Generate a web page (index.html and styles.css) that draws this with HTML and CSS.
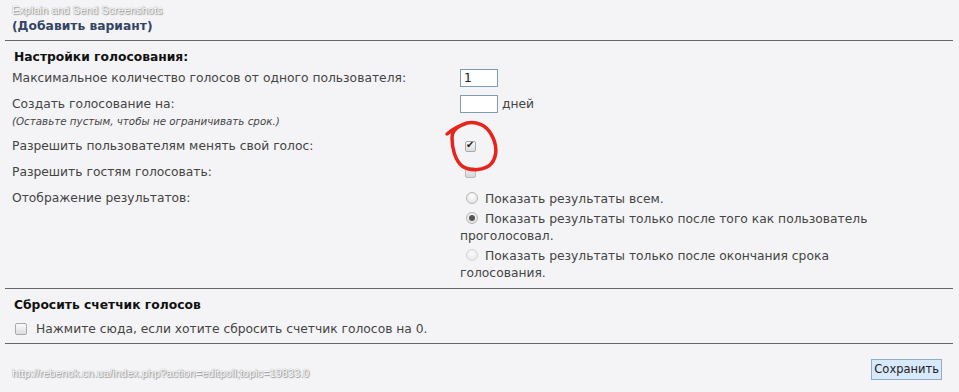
FILE: index.html
```html
<!DOCTYPE html>
<html lang="ru">
<head>
    <meta charset="UTF-8">
    <title>Редактировать голосование</title>
    <link rel="stylesheet" href="styles.css">
</head>
<body>
    <div class="page">
        <div class="stamp">Explain and Send Screenshots</div>
        <div class="add-option">(Добавить вариант)</div>
        <hr class="divider">

        <div class="section">
            <h3 class="section-title">Настройки голосования:</h3>
            <div class="settings">
                <div class="label">Максимальное количество голосов от одного пользователя:</div>
                <div class="value"><input class="text-input" type="text" value="1"></div>

                <div class="label">
                    Создать голосование на:
                    <div class="hint">(Оставьте пустым, чтобы не ограничивать срок.)</div>
                </div>
                <div class="value"><input class="text-input" type="text" value=""> <span>дней</span></div>

                <div class="label">Разрешить пользователям менять свой голос:</div>
                <div class="value"><span class="check checked"></span></div>

                <div class="label">Разрешить гостям голосовать:</div>
                <div class="value"><span class="check faded"></span></div>

                <div class="label">Отображение результатов:</div>
                <div class="value radios">
                    <div class="radio-item"><span class="radio"></span>Показать результаты всем.</div>
                    <div class="radio-item"><span class="radio checked"></span>Показать результаты только после того как пользователь проголосовал.</div>
                    <div class="radio-item"><span class="radio faded"></span>Показать результаты только после окончания срока голосования.</div>
                </div>
            </div>
        </div>
        <hr class="divider">

        <div class="section">
            <h3 class="section-title">Сбросить счетчик голосов</h3>
            <div class="reset-row"><span class="check"></span>Нажмите сюда, если хотите сбросить счетчик голосов на 0.</div>
        </div>
        <hr class="divider">

        <div class="footer">
            <div class="stamp">http://rebenok.cn.ua/index.php?action=editpoll;topic=19833.0</div>
            <button class="save-btn">Сохранить</button>
        </div>
    </div>

    <svg class="scribble" viewBox="440 115 65 62" width="65" height="62">
        <path d="M447 134 C452 130, 458 126, 467 123 C476 121, 486 125, 491 134 C497 144, 498 156, 491 164 C485 170, 471 172, 462 166 C455 160, 452 148, 452 138 C452 132, 456 128, 460 126" fill="none" stroke="#e8231b" stroke-width="3.5" stroke-linecap="round" stroke-linejoin="round"/>
    </svg>
</body>
</html>
```

FILE: styles.css
```css
* {
    box-sizing: border-box;
}

html, body {
    margin: 0;
    padding: 0;
    background: #f4f4f6;
    font-family: "DejaVu Sans", Verdana, sans-serif;
    font-size: 12.3px;
    color: #444;
}

.page {
    padding: 4px 6px 0 5px;
}

.stamp {
    font-family: "Liberation Sans", Arial, sans-serif;
    font-size: 11px;
    line-height: 13px;
    color: #fff;
    text-shadow: 0 0 1px #777, 1px 1px 1px #999;
    padding-left: 7px;
}

.add-option {
    font-weight: bold;
    color: #334466;
    line-height: 18px;
    padding-left: 7px;
}

.divider {
    border: 0;
    border-top: 1px solid #666;
    margin: 5px 0 0 0;
}

.section {
    padding: 0 7px;
}

.section-title {
    margin: 0;
    padding: 7px 2px 0;
    font-size: 12.3px;
    line-height: 18px;
    color: #111;
}

.settings {
    display: grid;
    grid-template-columns: 448px 440px;
    row-gap: 8px;
    margin-top: 3px;
    padding-bottom: 1px;
}

.label {
    line-height: 18px;
}

.hint {
    font-size: 10.3px;
    font-style: italic;
    line-height: 16px;
}

.value {
    display: flex;
    align-items: center;
    gap: 4px;
    height: 18px;
}

.text-input {
    width: 38px;
    height: 18px;
    border: 1px solid #7f9db9;
    background: #fff;
    font-family: "DejaVu Sans", Verdana, sans-serif;
    font-size: 12.3px;
    color: #222;
    padding: 0 3px;
}

.check {
    display: inline-block;
    width: 11px;
    height: 11px;
    margin-left: 5px;
    border: 1px solid #a9a9a9;
    border-radius: 2px;
    background: linear-gradient(#fbfbfb, #dcdcdc);
    position: relative;
    flex: none;
}

.check.checked::after {
    content: "✔";
    position: absolute;
    left: 0;
    top: -3px;
    font-size: 10px;
    color: #222;
}

.check.faded {
    border-color: #bbb;
    background: linear-gradient(#eee, #d6d6d6);
}

.value.radios {
    display: block;
    height: auto;
    padding-top: 2px;
    line-height: 17px;
}

.radio-item + .radio-item {
    margin-top: 3px;
}

.radio {
    display: inline-block;
    width: 12px;
    height: 12px;
    margin: 0 7px 0 6px;
    border: 1px solid #b5b5b5;
    border-radius: 50%;
    background: radial-gradient(circle at 50% 35%, #fff, #dcdcdc);
    vertical-align: -1px;
    position: relative;
}

.radio.checked::after {
    content: "";
    position: absolute;
    left: 2px;
    top: 2px;
    width: 6px;
    height: 6px;
    border-radius: 50%;
    background: #555;
}

.radio.faded {
    opacity: 0.5;
}

.reset-row {
    display: flex;
    align-items: center;
    gap: 9px;
    padding: 6px 0 0 3px;
    line-height: 18px;
}

.reset-row .check {
    width: 12px;
    height: 12px;
    margin-left: 0;
}

.footer {
    display: flex;
    justify-content: space-between;
    align-items: center;
    padding: 14px 11px 0 0;
}

.footer .stamp {
    padding-top: 9px;
}

.save-btn {
    font-family: "DejaVu Sans", Verdana, sans-serif;
    font-size: 11.5px;
    color: #222;
    background: #d8e9fb;
    border: 1px solid #8eaccb;
    padding: 1px 2px;
    height: 21px;
}

.scribble {
    position: absolute;
    left: 440px;
    top: 115px;
}
```
